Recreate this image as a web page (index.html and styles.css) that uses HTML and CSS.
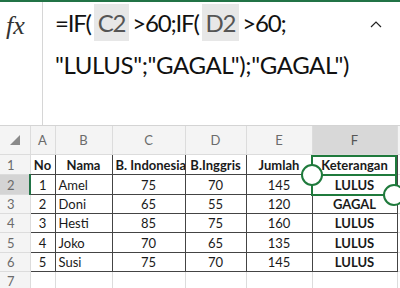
FILE: index.html
```html
<!DOCTYPE html>
<html lang="id">
<head>
  <meta charset="UTF-8">
  <title>Rumus IF</title>
  <link rel="stylesheet" href="styles.css">
</head>
<body>
  <div class="formula-bar">
    <div class="fx">fx</div>
    <div class="formula">
      <div class="line first">=IF( <span class="ref">C2</span> &gt;60;IF( <span class="ref">D2</span> &gt;60;</div>
      <div class="line">"LULUS";"GAGAL");"GAGAL")</div>
    </div>
    <div class="collapse">
      <svg width="12" height="7" viewBox="0 0 12 7"><path d="M1 6 L6 1 L11 6" fill="none" stroke="#222" stroke-width="1.2"/></svg>
    </div>
  </div>

  <div class="sheet">
    <table>
      <colgroup>
        <col class="w-rh"><col class="w-a"><col class="w-b"><col class="w-c"><col class="w-d"><col class="w-e"><col class="w-f"><col>
      </colgroup>
      <tr class="col-head">
        <th class="corner"><svg width="10" height="10" viewBox="0 0 10 10"><path d="M10 0 L10 10 L0 10 Z" fill="#8a8a8a"/></svg></th>
        <th>A</th><th>B</th><th>C</th><th>D</th><th>E</th><th class="active">F</th><th></th>
      </tr>
      <tr class="r1">
        <th>1</th>
        <td class="d b c">No</td><td class="d b c">Nama</td><td class="d b c">B. Indonesia</td><td class="d b c">B.Inggris</td><td class="d b c">Jumlah</td><td class="d b c">Keterangan</td><td></td>
      </tr>
      <tr class="r2">
        <th class="active-row">2</th>
        <td class="d c">1</td><td class="d">Amel</td><td class="d c">75</td><td class="d c">70</td><td class="d c">145</td><td class="d b c">LULUS</td><td></td>
      </tr>
      <tr class="r3">
        <th>3</th>
        <td class="d c">2</td><td class="d">Doni</td><td class="d c">65</td><td class="d c">55</td><td class="d c">120</td><td class="d b c">GAGAL</td><td></td>
      </tr>
      <tr class="r4">
        <th>4</th>
        <td class="d c">3</td><td class="d">Hesti</td><td class="d c">85</td><td class="d c">75</td><td class="d c">160</td><td class="d b c">LULUS</td><td></td>
      </tr>
      <tr class="r5">
        <th>5</th>
        <td class="d c">4</td><td class="d">Joko</td><td class="d c">70</td><td class="d c">65</td><td class="d c">135</td><td class="d b c">LULUS</td><td></td>
      </tr>
      <tr class="r6">
        <th>6</th>
        <td class="d c">5</td><td class="d">Susi</td><td class="d c">75</td><td class="d c">70</td><td class="d c">145</td><td class="d b c">LULUS</td><td></td>
      </tr>
      <tr class="r7">
        <th>7</th>
        <td></td><td></td><td></td><td></td><td></td><td></td><td></td>
      </tr>
    </table>

    <!-- selection overlay -->
    <div class="selection"></div>
    <div class="sel-mid"></div>
    <div class="handle h-top"></div>
    <div class="handle h-bottom"></div>
  </div>
</body>
</html>
```

FILE: styles.css
```css
body {
  margin: 0;
  width: 400px;
  height: 288px;
  overflow: hidden;
  background: #fff;
  font-family: Lato, "Open Sans", sans-serif;
  color: #1a1a1a;
}
.formula-bar {
  display: flex;
  height: 126px;
  border-top: 2px solid #217346;
  border-bottom: 1px solid #d4d4d4;
  box-sizing: border-box;
}
.fx {
  width: 43px;
  flex: none;
  border-right: 1px solid #d6d6d6;
  box-sizing: border-box;
  font-family: "Liberation Serif", serif;
  font-style: italic;
  font-size: 26px;
  line-height: 26px;
  color: #333;
  padding: 11px 0 0 6px;
}
.formula {
  flex: 1;
  padding: 2px 0 0 12px;
  font-size: 24px;
  letter-spacing: -0.4px;
  color: #111;
}
.line {
  height: 42px;
  line-height: 38px;
  white-space: nowrap;
}
.line.first {
  letter-spacing: -1.2px;
  word-spacing: -2px;
}
.ref {
  display: inline-block;
  background: #e7e7e7;
  color: #555;
  padding: 0 4px;
  line-height: 37px;
}
.collapse {
  width: 30px;
  flex: none;
  padding-top: 19px;
}
.collapse svg {
  display: block;
}
.sheet {
  position: relative;
}
table {
  border-collapse: collapse;
  table-layout: fixed;
  width: 420px;
  font-size: 13px;
}
.w-rh { width: 30px; }
.w-a { width: 25px; }
.w-b { width: 57px; }
.w-c { width: 73px; }
.w-d { width: 61px; }
.w-e { width: 66px; }
.w-f { width: 85px; }
th, td {
  border: 1px solid #dcdcdc;
  padding: 0;
  white-space: nowrap;
  overflow: hidden;
}
th {
  background: #f4f4f4;
  color: #6b6b6b;
  font-weight: normal;
  font-size: 13px;
}
tr th:first-child {
  text-align: left;
  padding-left: 7px;
  border-left: none;
}
.col-head th {
  height: 28px;
  border-top: none;
}
.col-head .active {
  background: #d8d8d8;
  color: #555;
}
.col-head th.corner {
  padding: 0;
  text-align: center;
  vertical-align: middle;
}
.corner svg {
  display: block;
  margin-left: 10px;
}
.r1, .r2, .r5 { height: 20px; }
.r3, .r4, .r6 { height: 19px; }
.r7 { height: 19px; }
td.d {
  border: 1px solid #444;
  padding: 0 3px;
}
td.c { text-align: center; }
td.b { font-weight: bold; }
.active-row {
  background: #d4d4d4;
  border-right: 2px solid #217346;
}
.selection {
  position: absolute;
  left: 311px;
  top: 29px;
  width: 86px;
  height: 41px;
  border: 2px solid #1f7a3c;
  box-sizing: border-box;
}
.sel-mid {
  position: absolute;
  left: 311px;
  top: 48px;
  width: 86px;
  height: 2px;
  background: #1f7a3c;
}
.handle {
  position: absolute;
  width: 18px;
  height: 18px;
  border: 2px solid #1f7a3c;
  border-radius: 50%;
  background: #fff;
}
.h-top {
  left: 301px;
  top: 38px;
}
.h-bottom {
  left: 383px;
  top: 58px;
}
```
